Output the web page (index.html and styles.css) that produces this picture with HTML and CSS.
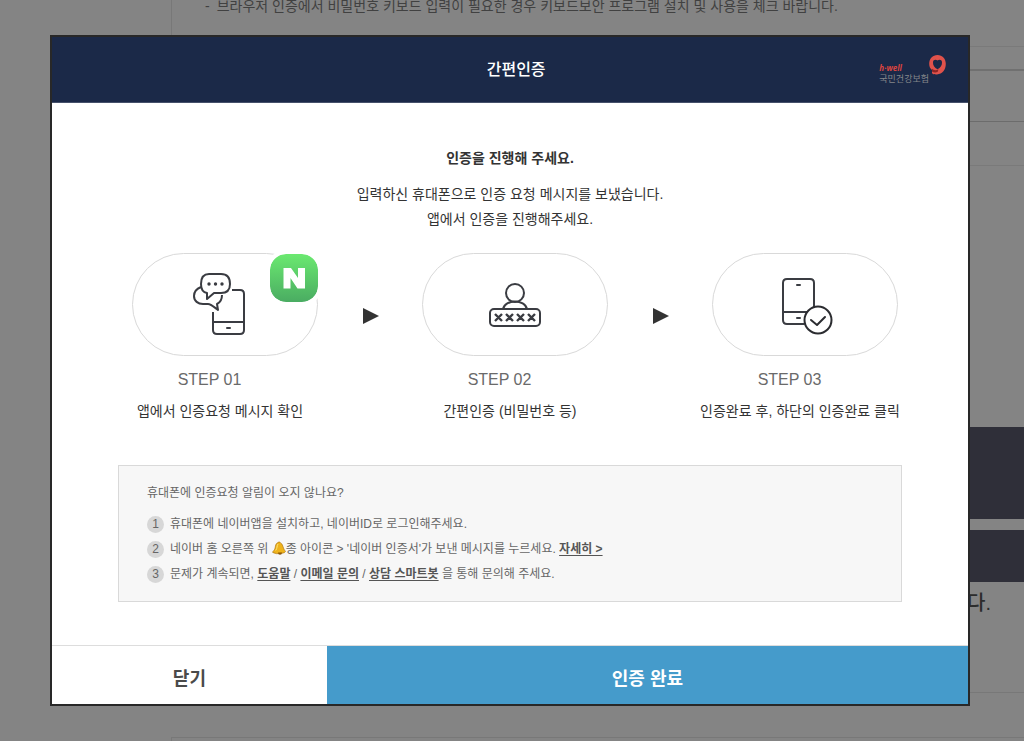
FILE: index.html
```html
<!DOCTYPE html>
<html lang="ko">
<head>
<meta charset="utf-8">
<meta name="viewport" content="width=device-width, initial-scale=1">
<title>간편인증</title>
<link rel="stylesheet" href="styles.css">
</head>
<body>
<main class="page">
  <div class="page-panel">
    <p class="page-note"><span>-</span>브라우저 인증에서 비밀번호 키보드 입력이 필요한 경우 키보드보안 프로그램 설치 및 사용을 체크 바랍니다.</p>
    <div class="page-rows">
      <div class="page-row"></div>
      <div class="page-row page-row-short"></div>
    </div>
    <div class="page-bar page-bar-tall"></div>
    <div class="page-bar"></div>
    <p class="page-end">다.</p>
  </div>
  <div class="page-box"></div>
</main>

<div class="overlay">
  <section class="modal" role="dialog" aria-modal="true" aria-labelledby="modal-title">
    <header class="modal-header">
      <h1 class="modal-title" id="modal-title">간편인증</h1>
      <div class="logo">
        <div class="logo-text"><span class="logo-en">h·well</span><span class="logo-ko">국민건강보험</span></div>
        <svg class="logo-mark" viewBox="0 0 17 20" aria-hidden="true">
          <path fill="#e0524b" fill-rule="evenodd" d="M8.500 0C13.400 0 16.800 3.600 16.800 8.800C16.800 15 13.400 19.200 8 19.400C5.500 19.500 3.700 19 3 18.200L3 15C1.200 13.700 .2 11.500 .2 8.800C.2 3.600 3.600 0 8.500 0ZM8.500 5.500C7 4 4.200 4.500 4 7C3.700 10 5.500 13 8.500 14.200C11.500 13 13.300 10 13 7C12.800 4.500 10 4 8.500 5.500Z"/>
          <path fill="#8f2424" d="M3 13.800C4.800 15.500 7 15.500 9.500 14.200L8.600 17C6.500 17.900 4.300 17.500 3 16.400Z"/>
        </svg>
      </div>
    </header>

    <div class="modal-body">
      <h2 class="lead">인증을 진행해 주세요.</h2>
      <p class="desc">입력하신 휴대폰으로 인증 요청 메시지를 보냈습니다.<br>앱에서 인증을 진행해주세요.</p>

      <div class="steps">
        <div class="step">
          <div class="oval-wrap">
            <div class="oval">
              <svg class="step-icon" viewBox="5 0 62 64" aria-hidden="true">
                <g fill="none" stroke="#3a3c42" stroke-width="2" stroke-linejoin="round">
                  <path d="M43 17H51Q55 17 55 21V57Q55 61 51 61H28Q24 61 24 57V39M24 49H55"/>
                  <path d="M12 14C7 16 5 19 5 23C5 28 9 31 14 31H19C22 31 25 34 29 37L28 31C32 29 33 26 33 22"/>
                  <path fill="#fff" d="M20 1H32Q41 1 41 11Q41 20 32 20H25L18 26V20Q12 19 12 11Q12 1 20 1Z"/>
                  <path stroke-linecap="round" d="M38 55H41"/>
                </g>
                <g fill="#3a3c42"><circle cx="20" cy="11" r="1.700"/><circle cx="26.500" cy="11" r="1.700"/><circle cx="33" cy="11" r="1.700"/></g>
              </svg>
              <svg class="naver" viewBox="0 0 48 48" role="img" aria-label="네이버">
                <defs><linearGradient id="green" x1="0" y1="0" x2="0" y2="1"><stop offset="0" stop-color="#6be970"/><stop offset="1" stop-color="#4aac62"/></linearGradient></defs>
                <rect width="48" height="48" rx="16" fill="url(#green)"/>
                <path fill="#fff" d="M13.500 14H21L28 24V14H35V34.500H27.500L20.500 24V34.500H13.500Z"/>
              </svg>
            </div>
          </div>
          <p class="step-no">STEP 01</p>
          <p class="step-label">앱에서 인증요청 메시지 확인</p>
        </div>
        <div class="arrow"><svg viewBox="0 0 16 16" aria-hidden="true"><path fill="#333" d="M0 0L16 8L0 16Z"/></svg></div>
        <div class="step">
          <div class="oval-wrap">
            <div class="oval">
              <svg class="step-icon" viewBox="0 0 62 64" aria-hidden="true">
                <g fill="none" stroke="#3a3c42" stroke-width="2">
                  <circle cx="31" cy="20" r="9"/>
                  <path d="M19 36C21 26 41 26 43 36"/>
                  <rect x="6" y="36" width="50" height="17" rx="4"/>
                  <path stroke-width="2.400" d="M11 41l7 7m0-7l-7 7M22 41l7 7m0-7l-7 7M33 41l7 7m0-7l-7 7M44 41l7 7m0-7l-7 7"/>
                </g>
              </svg>
            </div>
          </div>
          <p class="step-no">STEP 02</p>
          <p class="step-label">간편인증 (비밀번호 등)</p>
        </div>
        <div class="arrow"><svg viewBox="0 0 16 16" aria-hidden="true"><path fill="#333" d="M0 0L16 8L0 16Z"/></svg></div>
        <div class="step">
          <div class="oval-wrap">
            <div class="oval">
              <svg class="step-icon" viewBox="0 0 62 64" aria-hidden="true">
                <g fill="none" stroke="#3a3c42" stroke-width="2" stroke-linecap="round" stroke-linejoin="round">
                  <path d="M30 51H13Q9 51 9 47V10Q9 6 13 6H36Q40 6 40 10V38M9 39H35M23 12H26M23 45H26"/>
                  <circle cx="44" cy="47" r="13.500" fill="#fff" stroke="#2b2c30"/>
                  <path stroke="#2b2c30" d="M37 47l6 5l8-8"/>
                </g>
              </svg>
            </div>
          </div>
          <p class="step-no">STEP 03</p>
          <p class="step-label">인증완료 후, 하단의 인증완료 클릭</p>
        </div>
      </div>

      <div class="help">
        <h3 class="help-title">휴대폰에 인증요청 알림이 오지 않나요?</h3>
        <ol class="help-list">
          <li><span class="num">1</span><span>휴대폰에 네이버앱을 설치하고, 네이버ID로 로그인해주세요.</span></li>
          <li><span class="num">2</span><span>네이버 홈 오른쪽 위 <svg class="bell" viewBox="0 0 14 14" role="img" aria-label="알림"><path fill="#eeb31c" stroke="#a66c0b" stroke-width=".6" d="M6 1.500Q7.500 0 8.500 2C11.500 3 10.500 7.500 13.500 10.500Q13 12 10 12.300Q4 13.500 .7 11.500Q.5 10.500 2 9.300C4 7 2.500 3 6 1.500Z"/><path fill="#8d5809" d="M6 11.500h4q0 2.200-2 2.200t-2-2.200Z"/><path stroke="#ffe576" fill="none" d="M6 3C4.700 5 5.500 7 3.700 9.500"/></svg>종 아이콘 &gt; '네이버 인증서'가 보낸 메시지를 누르세요. <a href="#detail">자세히 &gt;</a></span></li>
          <li><span class="num">3</span><span>문제가 계속되면, <a href="#help">도움말</a> / <a href="#email">이메일 문의</a> / <a href="#bot">상담 스마트봇</a> 을 통해 문의해 주세요.</span></li>
        </ol>
      </div>
    </div>

    <footer class="modal-footer">
      <button class="btn btn-close" type="button">닫기</button>
      <button class="btn btn-done" type="button">인증 완료</button>
    </footer>
  </section>
</div>
</body>
</html>
```
FILE: styles.css
```css
* { box-sizing: border-box; }

body, h1, h2, h3, p, ol { margin: 0; padding: 0; }

body {
  background: #848484;
  color: #333;
  font-family: "Liberation Sans", "Noto Sans CJK KR", sans-serif;
}

/* Dimmed page behind the dialog */
.page {
  display: flex;
  flex-direction: column;
  height: 100vh;
  overflow: hidden;
  padding-left: 171px;
}
.page-panel {
  flex: none;
  border-left: 1px solid #787878;
  border-bottom: 1px solid #787878;
}
.page-note {
  height: 47px;
  padding-left: 33px;
  border-bottom: 1px solid #7a7a7a;
  color: #414141;
  font-size: 14px;
  line-height: 13px;
}
.page-note span { margin-right: 7px; }
.page-rows {
  margin-top: 22px;
  margin-bottom: 261px;
  border-top: 2px solid #707070;
}
.page-row { height: 51px; border-bottom: 1px solid #6c6c6c; }
.page-row-short { height: 44px; border-color: #7a7a7a; }
.page-bar { height: 52px; background: #2f2f39; }
.page-bar-tall { height: 92px; margin-bottom: 11px; }
.page-end {
  height: 110px;
  padding: 8px 33px 0 0;
  color: #2c2c2c;
  font-size: 20px;
  font-weight: 500;
  line-height: 26px;
  text-align: right;
}
.page-box {
  flex: 1;
  margin-top: 44px;
  border-top: 1px solid #787878;
  border-left: 1px solid #787878;
}

/* Dialog */
.overlay {
  position: fixed;
  inset: 0;
  padding: 35px 54px 35px 50px;
}
.modal {
  background: #fff;
  border: 2px solid #282828;
}
.modal-header {
  display: flex;
  align-items: center;
  height: 66px;
  padding: 0 22px 0 101px;
  background: #1b2948;
  border-bottom: 1px solid #46516b;
}
.modal-title {
  flex: 1;
  color: #fff;
  font-size: 16px;
  font-weight: 500;
  line-height: 24px;
  text-align: center;
}
.logo { display: flex; align-items: flex-start; }
.logo-text {
  display: flex;
  flex-direction: column;
  padding-top: 8px;
}
.logo-en {
  color: #d94440;
  font-family: "Open Sans", sans-serif;
  font-size: 8px;
  font-style: italic;
  font-weight: bold;
  line-height: 10px;
}
.logo-ko { color: #85878a; font-size: 9px; line-height: 12px; }
.logo-mark { width: 17px; height: 20px; }

.modal-body { padding: 43px 0; }
.lead {
  font-size: 14px;
  font-weight: bold;
  line-height: 24px;
  text-align: center;
}
.desc {
  margin-top: 12px;
  font-size: 14px;
  line-height: 25px;
  text-align: center;
}

.steps {
  display: grid;
  grid-template-columns: 1fr 28px 1fr 28px 1fr;
  margin: 21px 37px 0;
}
.step { text-align: center; }
.oval-wrap { display: flex; justify-content: center; padding-left: 10px; }
.oval {
  position: relative;
  display: flex;
  align-items: center;
  justify-content: center;
  width: 186px;
  height: 103px;
  border: 1px solid #d9d9d9;
  border-radius: 52px;
}
.step-icon { width: 62px; height: 64px; overflow: visible; }
.naver {
  position: absolute;
  top: 0;
  right: -1px;
  width: 48px;
  height: 48px;
  border-radius: 16px;
  box-shadow: 0 0 0 4px #fff;
}
.arrow { padding: 55px 0 0 12px; }
.arrow svg { display: block; width: 16px; height: 16px; }
.step-no {
  margin-top: 12px;
  padding-right: 21px;
  color: #6a6a6a;
  font-size: 16px;
  line-height: 24px;
}
.step-label { margin-top: 7px; font-size: 14px; line-height: 24px; }

.help {
  margin: 42px 66px 0;
  padding: 15px 28px 14px;
  background: #f7f7f7;
  border: 1px solid #d9d9d9;
  color: #666;
  font-size: 12px;
}
.help-title { font-size: 12px; font-weight: normal; line-height: 24px; }
.help-list { margin-top: 7px; list-style: none; }
.help-list li {
  display: flex;
  align-items: center;
  gap: 6px;
  line-height: 25px;
}
.num {
  width: 17px;
  height: 17px;
  border-radius: 50%;
  background: #d7d7d7;
  line-height: 17px;
  text-align: center;
}
.help-list a {
  color: #555;
  font-weight: bold;
  text-decoration: underline;
  text-underline-offset: 2px;
}
.bell { width: 14px; height: 14px; vertical-align: -2px; }

.modal-footer {
  display: grid;
  grid-template-columns: 3fr 7fr;
  border-top: 1px solid #ddd;
}
.btn {
  height: 58px;
  padding: 3px 0 0;
  border: 0;
  font-family: inherit;
  font-size: 18px;
  font-weight: bold;
}
.btn-close { background: #fff; color: #4a4a4a; }
.btn-done { background: #459bcb; color: #fff; }
```
